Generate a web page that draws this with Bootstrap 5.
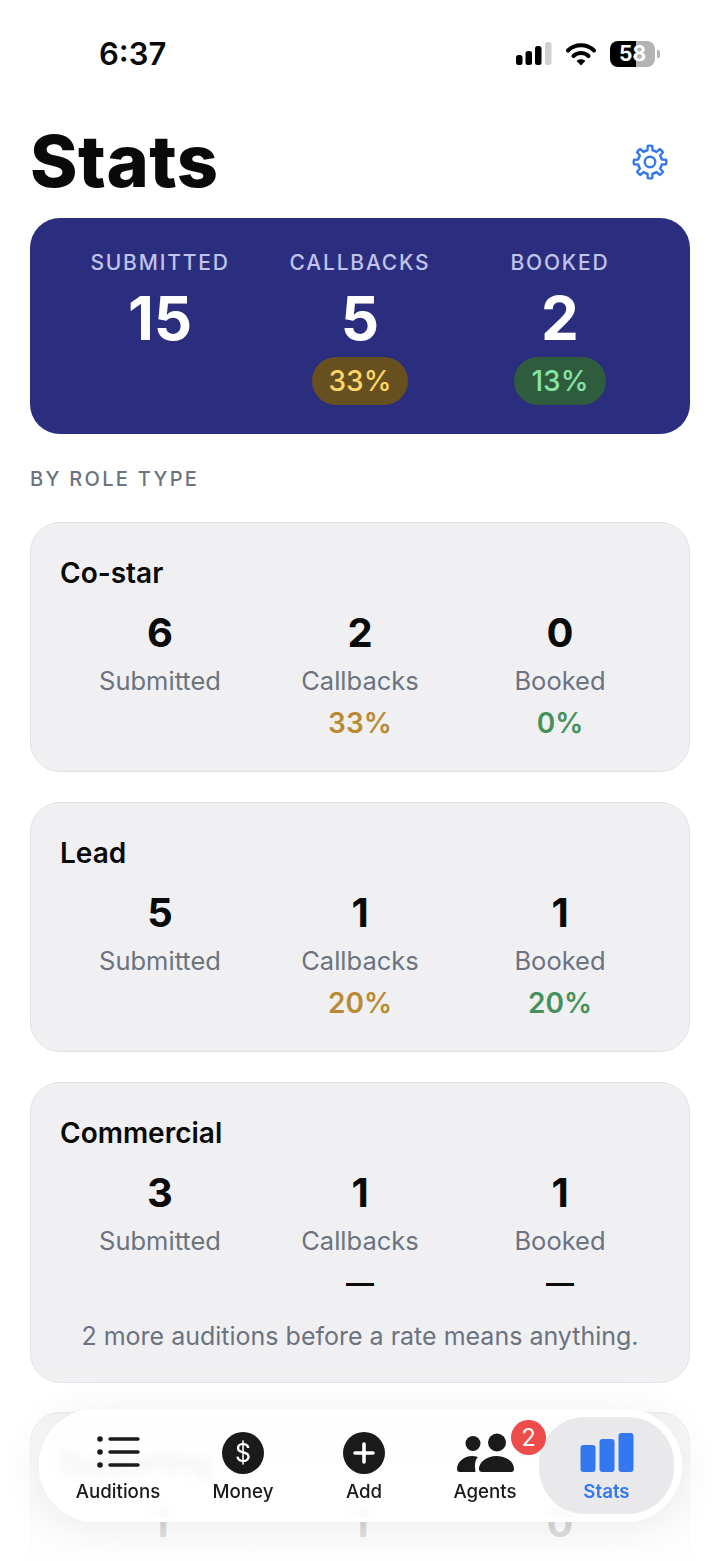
<!DOCTYPE html>
<html lang="en">
<head>
  <meta charset="UTF-8" />
  <meta name="viewport" content="width=device-width, initial-scale=1" />
  <title>Stats</title>
  <link href="https://cdn.jsdelivr.net/npm/bootstrap@5.3.0/dist/css/bootstrap.min.css" rel="stylesheet">
  <style>
    html, body {
      height: 1561px;
      overflow: hidden;
      background-color: #fff;
    }
    body {
      font-family: Inter, "Liberation Sans", sans-serif;
      color: #0a0a0a;
    }
    #screen {
      position: relative;
      height: 1561px;
      overflow: hidden;
    }
    .status-bar {
      height: 108px;
      padding: 34px 60px 0 99px;
    }
    .status-time {
      font-size: 31px;
      font-weight: 600;
      line-height: 40px;
    }
    .status-icons {
      gap: 14px;
      padding-top: 7px;
    }
    .battery-pill {
      width: 45px;
      height: 26px;
      border-radius: 8px;
      overflow: hidden;
      background: linear-gradient(90deg, #000 58%, #b3b3b3 58%);
      color: #fff;
      font-size: 21px;
      font-weight: 700;
      line-height: 26px;
      text-align: center;
    }
    .battery-nub {
      width: 3px;
      height: 8px;
      margin-left: 2px;
      border-radius: 0 2px 2px 0;
      background-color: #b3b3b3;
    }
    .page-title {
      height: 110px;
      padding: 0 52px 0 30px;
    }
    .page-title h1 {
      margin: 0 0 5px;
      font-size: 72px;
      font-weight: 800;
      line-height: 82px;
      letter-spacing: 0.5px;
    }
    .page-title svg {
      margin-bottom: 2px;
    }
    .hero-box {
      height: 216px;
      margin: 0 30px;
      padding: 31px 30px 0;
      border-radius: 30px;
      background-color: #2b2e7e;
      color: #fff;
    }
    .hero-label {
      font-size: 21px;
      font-weight: 500;
      line-height: 28px;
      letter-spacing: 1.8px;
      color: #c0c3ea;
    }
    .hero-num {
      margin-top: 3px;
      font-size: 60px;
      font-weight: 700;
      line-height: 76px;
    }
    .hero-pill {
      display: inline-block;
      margin-top: 1px;
      padding: 0 16.5px;
      border-radius: 24px;
      font-size: 28px;
      font-weight: 500;
      line-height: 48px;
    }
    .pill-amber { background-color: #66501f; color: #fcd767; }
    .pill-green { background-color: #2f5c3c; color: #86e5a5; padding: 0 17.5px; }
    .section-title {
      margin: 33px 30px 31px;
      font-size: 20px;
      font-weight: 500;
      line-height: 24px;
      letter-spacing: 2.3px;
      color: #6b7280;
    }
    .role-box {
      margin: 0 30px 30px;
      padding: 30px 29px 0;
      height: 250px;
      border: 1px solid #e2e2e6;
      border-radius: 30px;
      background-color: #f0f0f2;
    }
    .role-box.with-note {
      height: 301px;
      margin-bottom: 29px;
    }
    .role-name {
      font-size: 28px;
      font-weight: 600;
      line-height: 40px;
    }
    .role-cols {
      margin-top: 14px;
    }
    .role-num {
      font-size: 40px;
      font-weight: 700;
      line-height: 52px;
    }
    .role-label {
      font-size: 25.5px;
      line-height: 44px;
      color: #6b7280;
    }
    .role-rate {
      margin-top: -1px;
      font-size: 28px;
      font-weight: 600;
      line-height: 42px;
    }
    .rate-amber { color: #b98a34; }
    .rate-green { color: #45915c; }
    .role-note {
      margin-top: 14px;
      font-size: 25px;
      line-height: 36px;
      color: #6b7280;
      text-align: center;
    }
    .bottom-fade {
      position: absolute;
      left: 0;
      right: 0;
      bottom: 0;
      height: 190px;
      background: linear-gradient(180deg, rgba(255,255,255,0) 0%, rgba(255,255,255,.55) 35%, rgba(255,255,255,.95) 100%);
    }
    .tab-shell {
      position: absolute;
      left: 39px;
      top: 1409px;
      width: 643px;
      height: 113px;
      padding: 3px 3px 3px 20px;
      border: 5px solid #fff;
      border-radius: 57px;
      background-color: rgba(255,255,255,.84);
      backdrop-filter: blur(5px);
      box-shadow: 0 4px 44px rgba(0,0,0,.07);
    }
    .tab-item {
      position: relative;
      flex: none;
      width: 108px;
      height: 97px;
      margin-right: 13px;
      padding-top: 14px;
      color: #1a1a1a;
      font-size: 18.7px;
      font-weight: 500;
      line-height: 24px;
      text-align: center;
      white-space: nowrap;
    }
    .tab-item:first-child { margin-right: 17px; }
    .tab-item.tab-before-active { margin-right: 0; }
    .tab-item svg {
      display: block;
      height: 44px;
      margin: 0 auto 5px;
    }
    .tab-item.active {
      width: 135px;
      margin-right: 0;
      border-radius: 46px;
      background-color: #e9e9eb;
      color: #3478f0;
      font-weight: 600;
    }
    .tab-badge {
      position: absolute;
      z-index: 2;
      top: 3px;
      right: -7px;
      width: 35px;
      height: 35px;
      border-radius: 50%;
      background-color: #ee4b4b;
      color: #fff;
      font-size: 24px;
      font-weight: 400;
      line-height: 35px;
    }
  </style>
</head>
<body>
<div id="screen">

  <div class="status-bar d-flex justify-content-between align-items-start">
    <div class="status-time">6:37</div>
    <div class="status-icons d-flex align-items-center">
      <svg width="36" height="26" viewBox="0 0 36 26">
        <rect x="0" y="14" width="6.500" height="10" rx="2.500" fill="#000"/>
        <rect x="9.500" y="10" width="6.500" height="14" rx="2.500" fill="#000"/>
        <rect x="19" y="5" width="6.500" height="19" rx="2.500" fill="#000"/>
        <rect x="29" y="1" width="6.500" height="23" rx="2.500" fill="#d0d0d0"/>
      </svg>
      <svg width="30" height="26" viewBox="0 0 30 26">
        <path d="M2 9.500C9 2.500 21 2.500 28 9.500" fill="none" stroke="#000" stroke-width="4" stroke-linecap="round"/>
        <path d="M7.500 15C11.500 11 18.500 11 22.500 15" fill="none" stroke="#000" stroke-width="4" stroke-linecap="round"/>
        <path d="M15 24.500L10.500 19.700C13 17.600 17 17.600 19.500 19.700Z" fill="#000"/>
      </svg>
      <div class="d-flex align-items-center">
        <div class="battery-pill">58</div>
        <div class="battery-nub"></div>
      </div>
    </div>
  </div>

  <div class="page-title d-flex justify-content-between align-items-center">
    <h1>Stats</h1>
    <svg width="36" height="36" viewBox="0 0 24 24" fill="none" stroke="#3478f0" stroke-width="1.600" stroke-linecap="round" stroke-linejoin="round">
      <defs>
        <path id="gear-tooth" d="M8.940 4.610L10.340 4.180L10.500 1.310Q12 .9 13.500 1.310L13.660 4.180L15.060 4.610"/>
      </defs>
      <use href="#gear-tooth"/>
      <use href="#gear-tooth" transform="rotate(45 12 12)"/>
      <use href="#gear-tooth" transform="rotate(90 12 12)"/>
      <use href="#gear-tooth" transform="rotate(135 12 12)"/>
      <use href="#gear-tooth" transform="rotate(180 12 12)"/>
      <use href="#gear-tooth" transform="rotate(225 12 12)"/>
      <use href="#gear-tooth" transform="rotate(270 12 12)"/>
      <use href="#gear-tooth" transform="rotate(315 12 12)"/>
      <circle cx="12" cy="12" r="3.500"/>
    </svg>
  </div>

  <div class="hero-box">
    <div class="row g-0 text-center">
      <div class="col-4">
        <div class="hero-label">SUBMITTED</div>
        <div class="hero-num">15</div>
      </div>
      <div class="col-4">
        <div class="hero-label">CALLBACKS</div>
        <div class="hero-num">5</div>
        <span class="hero-pill pill-amber">33%</span>
      </div>
      <div class="col-4">
        <div class="hero-label">BOOKED</div>
        <div class="hero-num">2</div>
        <span class="hero-pill pill-green">13%</span>
      </div>
    </div>
  </div>

  <div class="section-title">BY ROLE TYPE</div>

  <div class="role-box">
    <div class="role-name">Co-star</div>
    <div class="row g-0 text-center role-cols">
      <div class="col-4"><div class="role-num">6</div><div class="role-label">Submitted</div></div>
      <div class="col-4"><div class="role-num">2</div><div class="role-label">Callbacks</div><div class="role-rate rate-amber">33%</div></div>
      <div class="col-4"><div class="role-num">0</div><div class="role-label">Booked</div><div class="role-rate rate-green">0%</div></div>
    </div>
  </div>

  <div class="role-box">
    <div class="role-name">Lead</div>
    <div class="row g-0 text-center role-cols">
      <div class="col-4"><div class="role-num">5</div><div class="role-label">Submitted</div></div>
      <div class="col-4"><div class="role-num">1</div><div class="role-label">Callbacks</div><div class="role-rate rate-amber">20%</div></div>
      <div class="col-4"><div class="role-num">1</div><div class="role-label">Booked</div><div class="role-rate rate-green">20%</div></div>
    </div>
  </div>

  <div class="role-box with-note">
    <div class="role-name">Commercial</div>
    <div class="row g-0 text-center role-cols">
      <div class="col-4"><div class="role-num">3</div><div class="role-label">Submitted</div></div>
      <div class="col-4"><div class="role-num">1</div><div class="role-label">Callbacks</div><div class="role-rate">—</div></div>
      <div class="col-4"><div class="role-num">1</div><div class="role-label">Booked</div><div class="role-rate">—</div></div>
    </div>
    <div class="role-note">2 more auditions before a rate means anything.</div>
  </div>

  <div class="role-box">
    <div class="role-name">Supporting</div>
    <div class="row g-0 text-center role-cols">
      <div class="col-4"><div class="role-num">1</div></div>
      <div class="col-4"><div class="role-num">1</div></div>
      <div class="col-4"><div class="role-num">0</div></div>
    </div>
  </div>

  <div class="bottom-fade"></div>

  <nav class="tab-shell d-flex">
    <div class="tab-item">
      <svg width="44" height="44" viewBox="0 0 44 44">
        <circle cx="4" cy="8" r="2.800" fill="#1a1a1a"/>
        <circle cx="4" cy="21" r="2.800" fill="#1a1a1a"/>
        <circle cx="4" cy="34" r="2.800" fill="#1a1a1a"/>
        <path d="M14 8H42M14 21H42M14 34H42" stroke="#1a1a1a" stroke-width="3.400" stroke-linecap="round"/>
      </svg>
      Auditions
    </div>
    <div class="tab-item">
      <svg width="44" height="44" viewBox="0 0 44 44">
        <circle cx="22" cy="22" r="21" fill="#1a1a1a"/>
        <text x="22" y="31" text-anchor="middle" font-family="Inter, sans-serif" font-size="25" font-weight="400" fill="#fff">$</text>
      </svg>
      Money
    </div>
    <div class="tab-item">
      <svg width="44" height="44" viewBox="0 0 44 44">
        <circle cx="22" cy="22" r="21" fill="#1a1a1a"/>
        <path d="M22 13V31M13 22H31" stroke="#fff" stroke-width="3.600" stroke-linecap="round"/>
      </svg>
      Add
    </div>
    <div class="tab-item tab-before-active">
      <svg width="58" height="44" viewBox="0 0 58 44">
        <circle cx="17" cy="12.500" r="7.500" fill="#1a1a1a"/>
        <path d="M1 38C1 31 8 25 16 25C18 25 20 25.300 22 26C19 29 18.500 33 19.500 41H3.500C2 41 1 40 1 38Z" fill="#1a1a1a"/>
        <circle cx="41" cy="11.500" r="9" fill="#1a1a1a"/>
        <path d="M23 38C23 30 32 25 40.500 25C49 25 58 30 58 38C58 40 57 41 55 41H26C24 41 23 40 23 38Z" fill="#1a1a1a"/>
      </svg>
      Agents
      <span class="tab-badge">2</span>
    </div>
    <div class="tab-item active">
      <svg width="54" height="44" viewBox="0 0 54 44">
        <rect x="0.500" y="14" width="15" height="27" rx="3" fill="#3478f0"/>
        <rect x="19.500" y="8" width="15" height="33" rx="3" fill="#3478f0"/>
        <rect x="38.500" y="2" width="15" height="39" rx="3" fill="#3478f0"/>
      </svg>
      Stats
    </div>
  </nav>

</div>
<script src="https://cdn.jsdelivr.net/npm/bootstrap@5.3.0/dist/js/bootstrap.bundle.min.js"></script>
</body>
</html>
